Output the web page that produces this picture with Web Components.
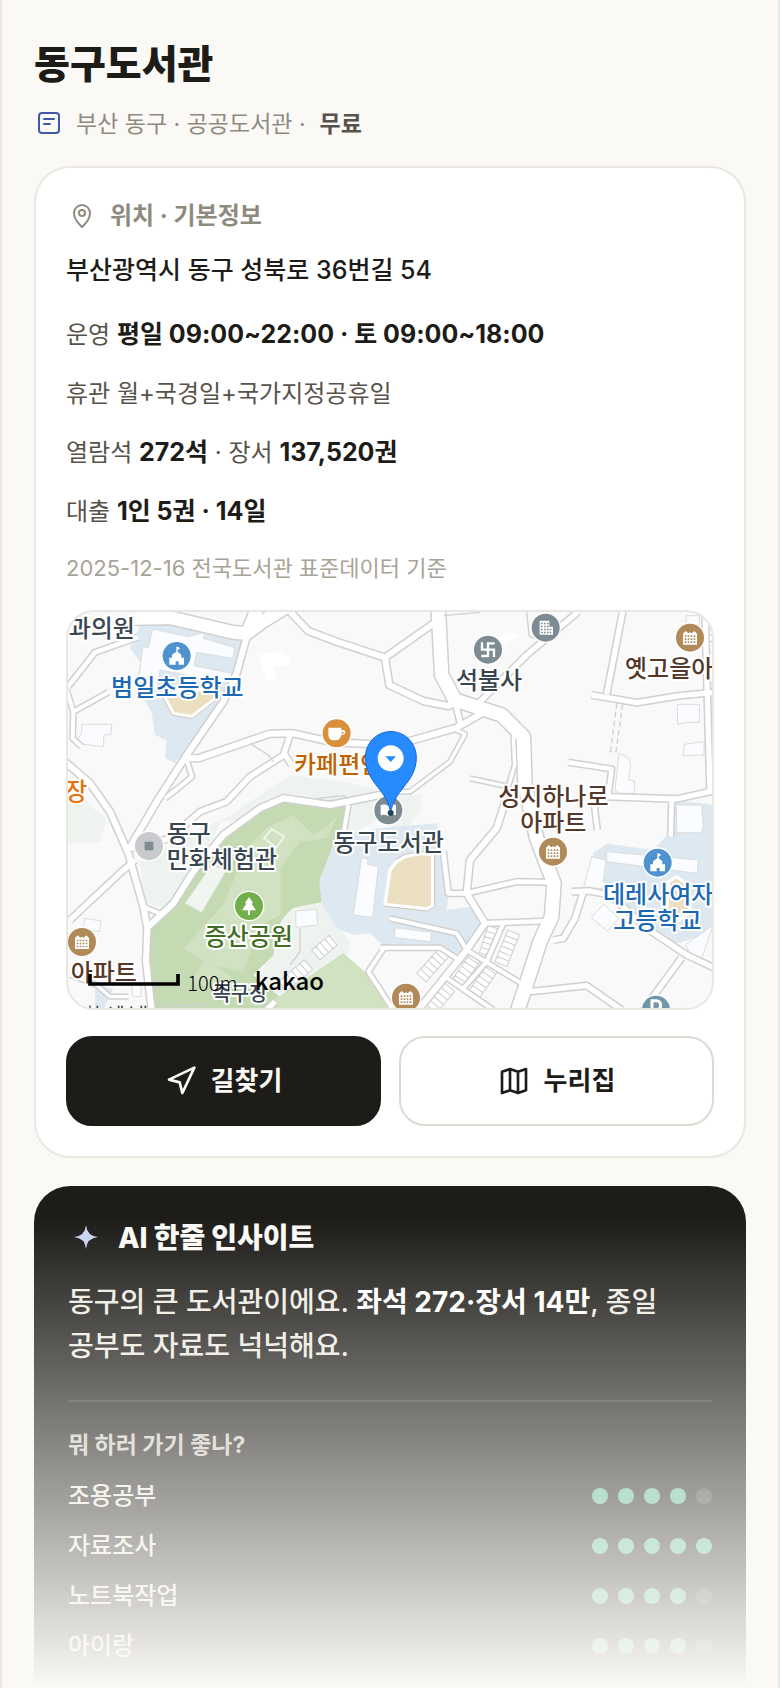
<!DOCTYPE html>
<html lang="ko">
<head>
<meta charset="utf-8">
<meta name="viewport" content="width=device-width, initial-scale=1">
<title>동구도서관</title>
<style>
    body {
        margin: 0;
        background: #faf9f5;
        color: #1d1c18;
        font-family: Inter, "Noto Sans CJK KR", sans-serif;
        font-size: 24px;
        line-height: 40px;
        word-break: keep-all;
    }
</style>
</head>
<body>

<library-page>
    <page-header slot="header" name="동구도서관"></page-header>
    <info-card></info-card>
    <insight-card></insight-card>
</library-page>

<script>
const define = (name, html, setup) => {
    const template = document.createElement('template');
    template.innerHTML = html;

    customElements.define(name, class extends HTMLElement {
        constructor () {
            super();
            this._shadowRoot = this.attachShadow({ mode: 'open' });
            this._shadowRoot.appendChild(template.content.cloneNode(true));
        }

        connectedCallback () {
            if (setup) setup(this, this._shadowRoot);
        }
    });
};

define('library-page', `
    <style>
        :host {
            display: flex;
            flex-direction: column;
            position: relative;
            box-sizing: border-box;
            height: 100vh;
            overflow: hidden;
            padding: 36px 32px 0;
            border: solid #e9e7e0;
            border-width: 0 2px;
        }
        main {
            display: flex;
            flex: 1;
            flex-direction: column;
            gap: 28px;
            padding-top: 22px;
        }
        .fade {
            position: absolute;
            inset: auto -2px 0;
            height: 470px;
            background: linear-gradient(rgba(250, 249, 245, 0), #faf9f5);
            pointer-events: none;
        }
    </style>
    <slot name="header"></slot>
    <main><slot></slot></main>
    <div class="fade"></div>
`);

define('page-header', `
    <style>
        :host { display: block; }
        h1 {
            margin: 0 0 12px;
            font-size: 39px;
            font-weight: 800;
            line-height: 56px;
        }
        p {
            display: flex;
            align-items: center;
            margin: 0;
            color: #8f8a7e;
            font-size: 23px;
        }
        svg { width: 30px; height: 30px; margin-right: 12px; }
        b { margin-left: 14px; color: #57534a; font-weight: 600; }
    </style>
    <h1></h1>
    <p>
        <svg viewBox="0 0 30 30" fill="none" stroke="#3f59a8" stroke-width="2" stroke-linecap="round">
            <rect x="5" y="4" width="20" height="20" rx="3"/>
            <path d="M10 10h10M10 15h6"/>
        </svg>
        <span>부산 동구 · 공공도서관 ·</span><b>무료</b>
    </p>
`, (host, root) => {
    root.querySelector('h1').textContent = host.getAttribute('name');
});

define('info-card', `
    <style>
        :host {
            display: block;
            padding: 30px;
            border: 2px solid #e9e7e0;
            border-radius: 36px;
            background: #fff;
        }
        h2 {
            display: flex;
            align-items: center;
            gap: 12px;
            margin: 0 0 14px;
            color: #8f8a7e;
            font-size: 24px;
            font-weight: 700;
            line-height: 36px;
        }
        h2 svg { width: 32px; height: 32px; }
        p { margin: 0; }
        .address { margin-bottom: 23px; font-size: 25px; font-weight: 500; line-height: 44px; }
        .rows {
            display: flex;
            flex-direction: column;
            gap: 19px;
            color: #57534a;
        }
        .rows b {
            color: #1d1c18;
            font-size: 25px;
            font-weight: 700;
            line-height: 30px;
        }
        .note {
            margin: 18px 0 24px;
            color: #a8a397;
            font-size: 22px;
            line-height: 36px;
        }
        .actions { display: flex; gap: 18px; margin-top: 26px; }
        .actions > * { flex: 1; }
    </style>
    <h2>
        <svg viewBox="0 0 32 32" fill="none" stroke="currentColor" stroke-width="2">
            <path d="M16 27C12 23 8 19 8 13a8 8 0 0 1 16 0c0 6-4 10-8 14z" stroke-linejoin="round"/>
            <circle cx="16" cy="13" r="3"/>
        </svg>
        <span>위치 · 기본정보</span>
    </h2>
    <p class="address">부산광역시 동구 성북로 36번길 54</p>
    <div class="rows">
        <p>운영 <b>평일 09:00~22:00 · 토 09:00~18:00</b></p>
        <p>휴관 월+국경일+국가지정공휴일</p>
        <p>열람석 <b>272석</b> · 장서 <b>137,520권</b></p>
        <p>대출 <b>1인 5권 · 14일</b></p>
    </div>
    <p class="note">2025-12-16 전국도서관 표준데이터 기준</p>
    <area-map></area-map>
    <div class="actions">
        <action-button>
            <svg slot="icon" viewBox="0 0 24 24"><path d="M3 11 22 2l-9 19-2-8z"/></svg>길찾기
        </action-button>
        <action-button href="#homepage">
            <svg slot="icon" viewBox="0 0 24 24"><path d="m3 5 6-2 6 2 6-2v16l-6 2-6-2-6 2zM9 3v16M15 5v16"/></svg>누리집
        </action-button>
    </div>
`);

define('action-button', `
    <style>
        :host { display: block; }
        a, button {
            display: flex;
            align-items: center;
            justify-content: center;
            gap: 14px;
            box-sizing: border-box;
            width: 100%;
            height: 90px;
            border: 2px solid #dcdad1;
            border-radius: 26px;
            background: #fff;
            color: #1d1c18;
            font: 700 26px/40px Inter, "Noto Sans CJK KR", sans-serif;
            text-decoration: none;
        }
        button { border-color: #1d1c18; background: #1d1c18; color: #faf9f5; }
        ::slotted(svg) {
            width: 32px;
            height: 32px;
            fill: none;
            stroke: currentColor;
            stroke-width: 2;
            stroke-linejoin: round;
        }
    </style>
`, (host, root) => {
    const href = host.getAttribute('href');
    const control = document.createElement(href ? 'a' : 'button');
    if (href) control.href = href;
    control.innerHTML = '<slot name="icon"></slot><span><slot></slot></span>';
    root.appendChild(control);
});

// Map units are a third of a pixel. Roads: [width, path]
const roads = [
    [14, 'M24 245 105 142 235 96'],
    [12, 'M20 255 40 320 38 400 65 425M40 320 145 262'],
    [18, 'M15 470 90 535 150 620 205 745 250 905 262 970 258 1070 275 1215'],
    [18, 'M560 95 530 205 490 290 380 450 290 590 205 735'],
    [18, 'M690 20 745 78 830 110 975 158 1125 52M975 158 988 240 1090 288 1165 303 1195 290'],
    [18, 'M375 460 415 460 630 386 700 385 820 412 990 420 1050 408 1190 368 1275 320'],
    [16, 'M690 390 672 445 695 480M672 450 570 515 500 590 420 620 330 700 215 730'],
    [12, 'M380 465 396 515 360 545 315 580'],
    [18, 'M970 568 810 600 670 580 600 610 490 690 400 800 340 895 262 968'],
    [12, 'M865 600 850 690'],
    [12, 'M250 905 310 930'],
    [16, 'M225 765 185 800 30 945'],
    [38, 'M225 40 330 38 520 82 560 85 610 48 680 5M560 90 590 15'],
    [40, 'M1135 15 1145 210 1185 285 1325 330 1390 395 1395 540 1430 700 1482 835 1475 935 1440 1010 1395 1150 1370 1225'],
    [16, 'M1555 20 1400 150 1255 295M1188 300 1202 360'],
    [10, 'M1190 375 1215 388 1170 470 1050 560 1010 560M1230 520 1345 545 1364 480 1360 390'],
    [18, 'M1350 545 1310 670 1230 765 1220 865 1275 955 1220 1035 1075 1215'],
    [14, 'M1150 740 1165 865 1220 865 1370 830 1480 832M1275 955 1460 948'],
    [16, 'M1690 10 1640 268M1595 270 1730 293 1860 272 1965 262M1935 15 1950 560 1850 582 1640 575'],
    [14, 'M1525 472 1655 492 1645 570M1600 575 1612 675M1835 585 1832 695M1950 100H1970'],
    [16, 'M1480 1005 1510 1000 1545 940 1570 860M1535 860 1590 858 1650 870 1760 970 1880 1050 1965 1090M1865 1058 1750 1215'],
    [12, 'M990 940 1190 985 1220 1035M960 1028H1140L1190 1060M975 1025 925 1100 1000 1215'],
    [12, 'M1220 1035 1400 1145M1330 955 1280 1070 1210 1150M1155 1115 1300 1215'],
    [16, 'M1410 1160 1580 1142 1685 1215M620 1215 645 1190'],
    [10, 'M30 1110 110 1140 150 1175 205 1175'],
];

// [x, y, colour, glyph]
const pins = [
    [350, 153, '#4f92d0', 'school'],
    [1793, 773, '#4f92d0', 'school'],
    [830, 385, '#d98f3c', 'cafe'],
    [1284, 134, '#7d8b92', 'temple'],
    [1457, 68, '#7d8b92', 'office'],
    [1890, 98, '#b08a58', 'flats'],
    [1479, 740, '#b08a58', 'flats'],
    [66, 1011, '#b08a58', 'flats'],
    [1038, 1178, '#b08a58', 'flats'],
    [567, 903, '#70af4c', 'tree'],
    [985, 616, '#7d8b92', 'book'],
    [267, 723, '#c8cace', 'square'],
    [1788, 1214, '#6f96aa', 'parking'],
];

const dots = (x, y, cols, rows) => {
    let d = '';
    for (let r = 0; r < rows; r++)
        for (let c = 0; c < cols; c++) d += `M${x + c * 9} ${y + r * 9}h5v5h-5z`;
    return `<path d="${d}" fill="currentColor"/>`;
};

const glyphs = {
    school: '<path d="M-22 26V5h8v-9L-1-13V-28H3L11-23 3-18v5L14-4v9h8v21H6V16h-9v10z"/>',
    cafe: '<path d="M-25-17H14v8c14-6 18 14 0 14-3 11-9 16-15 16h-9c-11 0-15-10-15-20zM15-4v6c8 0 8-9 0-6z" fill-rule="evenodd"/>',
    temple: '<path d="M0-22V22M-18-22V0H18V22M0-19H20M0 19H-20" fill="none" stroke="#fff" stroke-width="7"/>',
    office: '<path d="M-18-21H11V-3H22V21H-18z"/>' + dots(-14, -15, 3, 4) + dots(12, 3, 1, 2),
    flats: '<path d="M-21 21V-12l8-8 8 7 5-3 5 3 8-7 8 8v33z"/>' + dots(-16, -7, 4, 3),
    tree: '<path d="M0-27 13-8H7l14 21H3v14h-6V13h-18L-7-8h-6z"/>',
    book: '<path d="M-23-16Q-10-20 0-13 10-20 23-16V15Q10 11 0 18-10 11-23 15z"/>',
    square: '<path d="M-13-13H13V13H-13z" fill="#7d8b92"/>',
    parking: '<path d="M-12-4V-27H2Q14-25 14-13T2 1H-5" fill="none" stroke="#fff" stroke-width="9"/>',
};

// [x, baseline, anchor, colour, text]
const labels = [
    [26, 97, 'start', '#37464f', '과의원'],
    [352, 273, 'middle', '#1b69b6', '범일초등학교'],
    [702, 505, 'start', '#c26100', '카페편안'],
    [82, 584, 'end', '#e8720c', '장'],
    [1287, 252, 'middle', '#37464f', '석불사'],
    [1695, 217, 'start', '#54382a', '옛고을아'],
    [1480, 600, 'middle', '#54382a', '성지하나로'],
    [1480, 678, 'middle', '#54382a', '아파트'],
    [1629, 893, 'start', '#1b69b6', '데레사여자'],
    [1792, 972, 'middle', '#1b69b6', '고등학교'],
    [320, 710, 'start', '#37464f', '동구'],
    [320, 789, 'start', '#37464f', '만화체험관'],
    [986, 738, 'middle', '#37464f', '동구도서관'],
    [566, 1021, 'middle', '#3f6e24', '증산공원'],
    [32, 1128, 'start', '#54382a', '아파트'],
];

// A slanted row of n terraced houses
const terrace = (x, y, angle, n) => {
    let d = '';
    for (let i = 0; i < n; i++) d += `M${i * 17} 0h17v38h-17z`;
    return `<path transform="translate(${x} ${y}) rotate(${angle})" d="${d}"/>`;
};

define('area-map', `
    <style>
        :host {
            display: block;
            box-sizing: border-box;
            height: 400px;
            overflow: hidden;
            border: 2px solid #e9e7e0;
            border-radius: 28px;
            background: #f9f9f9;
        }
        svg { display: block; width: 100%; height: 100%; }
        .label, .small {
            font-family: "Noto Sans CJK KR", sans-serif;
            font-size: 72px;
            font-weight: 500;
            paint-order: stroke;
            stroke: #fff;
            stroke-width: 12px;
            stroke-linejoin: round;
        }
        .small { font-size: 60px; }
        .scale { font: 300 60px "Noto Sans CJK KR", sans-serif; }
        .brand { font: 500 72px "Noto Sans CJK KR", sans-serif; }
    </style>
    <svg viewBox="24 21 1932 1188" preserveAspectRatio="xMidYMid slice" role="img" aria-label="동구도서관 지도">
        <g fill="#eef3f0">
            <path d="M600 570 690 510 850 530 985 560 1000 620 850 700 560 640 480 650zM240 770 490 640 400 800 310 910 250 890z"/>
            <path d="M24 580 70 575 105 615 140 640 120 710 24 715zM990 570H1085L1080 620 1050 660 990 680z"/>
            <path d="M690 905 785 890 870 1010 860 1060 660 1170 600 1120 640 1000z"/>
        </g>
        <path fill="#c4dab2" d="M600 618 670 590 860 604 850 690 820 740 780 820 785 892 700 908Q665 935 655 970 L640 1050 580 1110 660 1175 850 1045 925 1110 985 1215H272L264 975 400 815 490 700z"/>
        <g fill="#d0e2c1">
            <path d="M620 670 700 630 760 690 830 640 800 700 720 710 690 750 662 790V930L600 960 550 1100 440 1075 370 1030 490 900 560 730z"/>
            <path d="M640 1185 850 1048 925 1110 985 1215H640zM440 1060 530 1130 510 1160 390 1130z"/>
        </g>
        <path fill="#f2f5ef" stroke="#dde3d8" stroke-width="3" d="M375 895 455 780 500 795 425 922z"/>
        <path fill="none" stroke="#eef5e8" stroke-width="6" d="M635 672 672 695 650 728 612 700z"/>
        <g fill="#dde8f0">
            <path d="M245 50 380 60 545 108 530 205 490 290 345 474 315 460 320 405 285 390 275 320 230 250 240 170 210 130z"/>
            <path d="M830 690 960 670 1130 655 1150 740 1165 875 1160 915 1235 905 1272 958 1218 1030 1185 1060 1140 1030 970 1020 930 985 880 990 830 970 785 895 778 830z"/>
            <path d="M1640 716 1780 735 1815 697 1960 600V980L1840 1020 1750 960 1660 870 1580 855 1600 745zM1845 585 1960 600V660L1845 690z"/>
            <path d="M105 1140 160 1150 130 1215H105z"/>
        </g>
        <g fill="#fafcff" stroke="#dcdcdc" stroke-width="3">
            <path d="M278 72 385 95 435 82 430 100 525 128 518 160 410 142 402 182 515 205 505 235 300 195 290 260 235 230 248 125 265 128z"/>
            <path d="M905 757 925 762 922 778 955 785 938 937 880 930zM1006 968 1115 982 1112 1010 1003 998z"/>
            <path d="M1595 755 1638 765 1630 830 1660 850 1570 850zM1640 740 1915 765 1912 805 1640 770zM1850 600 1925 600 1930 660 1925 683H1850z"/>
            <path d="M65 358 155 358 153 388 132 390 130 425 45 415 65 385zM75 940 123 948 118 980 70 972zM707 918 770 913 773 960 708 967zM215 1140H243V1175H218z"/>
            <path d="M1852 298H1918V352H1880L1853 358zM1873 418 1932 410V450L1870 452zM1677 445 1705 458 1712 480 1705 525 1723 528V565H1677L1665 555zM1878 32H1918V80H1878z"/>
            <path d="M1630 898 1677 940 1642 978 1594 938zM1876 1020 1960 960 1925 1060 1890 1045z"/>
        </g>
        <path fill="#fff" d="M595 150 655 138 690 155V180L640 185 650 220 620 230 610 190zM1290 110 1350 80 1375 95 1330 120z"/>
        <g fill="#eadfc0" stroke="#fff" stroke-width="10">
            <path d="M312 272 340 325 395 335 480 270 400 250z"/>
            <path d="M1010 770 1035 755 1080 745 1118 750V902L1100 912 975 898 990 795z"/>
            <path d="M1825 830 1850 815 1885 840 1890 920 1850 950 1820 920z"/>
        </g>
        <path fill="none" stroke="#c9ae98" stroke-width="2" d="M308 276 336 330 396 341 485 272M1006 764 1033 749 1082 739 1124 745V905L1102 918 970 903"/>
        <g fill="#fff" stroke="#cfcfcf" stroke-width="3">
            ${terrace(1070, 1105, -48, 6)}
            ${terrace(1175, 1125, -55, 6)}
            ${terrace(1228, 1155, -55, 6)}
            ${terrace(1258, 1043, -72, 5)}
            ${terrace(1305, 1070, -68, 6)}
            ${terrace(1100, 1200, -50, 5)}
            ${terrace(655, 1130, -40, 6)}
            ${terrace(755, 1035, -40, 4)}
        </g>
        <g fill="none" stroke-linejoin="round">
            <g stroke="#d0d0d0">${roads.map(([w, d]) => `<path stroke-width="${w + 9}" d="${d}"/>`).join('')}</g>
            <g stroke="#fff">${roads.map(([w, d]) => `<path stroke-width="${w}" d="${d}"/>`).join('')}</g>
            <path stroke="#d0d0d0" stroke-width="4" d="M570 415 625 450 640 470M1150 32 1260 22M1400 22 1408 95 1425 100M720 970V1040L690 1080M775 580 850 572 865 580M295 1205 465 1198"/>
            <path stroke="#d0d0d0" stroke-width="4" stroke-dasharray="16 10" d="M1670 295 1652 440M1688 298 1668 440H1648"/>
        </g>
        ${pins.map(([x, y, fill, glyph]) => `
            <g transform="translate(${x} ${y})" fill="#fff" color="${fill}">
                <circle r="46"/><circle r="42" fill="${fill}"/>${glyphs[glyph]}
            </g>`).join('')}
        ${labels.map(([x, y, anchor, fill, text]) =>
            `<text class="label" x="${x}" y="${y}" text-anchor="${anchor}" fill="${fill}">${text}</text>`).join('')}
        <text class="small" x="540" y="1187" text-anchor="middle" fill="#37464f">족구장</text>
        <path stroke="#37464f" stroke-width="5" d="M90 1202V1209M112 1202V1209M152 1205V1209M176 1202V1209M186 1202V1209M214 1204V1209M244 1202V1209M256 1202V1209"/>
        <path fill="#268bff" stroke="#1567d8" stroke-width="3" d="M992 627C986 555 916 535 916 457a75 76 0 0 1 153 0C1069 535 998 555 992 627z"/>
        <circle cx="992" cy="460" r="39" fill="#fff"/>
        <path fill="#268bff" d="M976 454H1008L992 471z"/>
        <circle cx="992" cy="624" r="9" fill="#23415f"/>
        <path fill="none" stroke="#000" stroke-width="11" d="M90 1107V1137H354V1107"/>
        <text class="scale" x="382" y="1158">100m</text>
        <text class="brand" x="584" y="1155">kakao</text>
    </svg>
`);

define('insight-card', `
    <style>
        :host {
            display: block;
            flex: 1;
            padding: 32px 34px 0;
            border-radius: 36px 36px 0 0;
            background: #1d1c18;
            color: #efece4;
        }
        h2 {
            display: flex;
            align-items: center;
            gap: 14px;
            margin: 0 0 22px;
            color: #faf9f5;
            font-size: 28px;
            font-weight: 800;
            line-height: 40px;
        }
        h2 svg { width: 36px; height: 36px; }
        p { margin: 0; font-size: 28px; font-weight: 500; line-height: 44px; }
        b { color: #fff; font-weight: 700; }
        h3 {
            margin: 32px 0 10px;
            padding-top: 27px;
            border-top: 2px solid rgba(255, 255, 255, .12);
            color: #cfcbc0;
            font-size: 23px;
            font-weight: 700;
            line-height: 32px;
        }
    </style>
    <h2>
        <svg viewBox="0 0 36 36"><path fill="#c9d3f0" d="M18 5Q19 16 30 17 19 18 18 29 17 18 6 17 17 16 18 5z"/></svg>
        <span>AI 한줄 인사이트</span>
    </h2>
    <p>동구의 큰 도서관이에요. <b>좌석 272·장서 14만</b>, 종일 공부도 자료도 넉넉해요.</p>
    <h3>뭐 하러 가기 좋나?</h3>
    <score-row score="4">조용공부</score-row>
    <score-row score="5">자료조사</score-row>
    <score-row score="4">노트북작업</score-row>
    <score-row score="4">아이랑</score-row>
`);

define('score-row', `
    <style>
        :host {
            display: flex;
            align-items: center;
            justify-content: space-between;
            font-weight: 500;
            line-height: 50px;
        }
        div { display: flex; gap: 10px; }
        i {
            width: 16px;
            height: 16px;
            border-radius: 50%;
            background: rgba(255, 255, 255, .16);
        }
        .on { background: #5cbd92; }
    </style>
    <span><slot></slot></span>
    <div role="img"></div>
`, (host, root) => {
    const score = Number(host.getAttribute('score'));
    const bar = root.querySelector('div');
    bar.setAttribute('aria-label', `5점 중 ${score}점`);
    bar.innerHTML = [1, 2, 3, 4, 5].map(n => `<i class="${n <= score ? 'on' : ''}"></i>`).join('');
});
</script>
</body>
</html>
